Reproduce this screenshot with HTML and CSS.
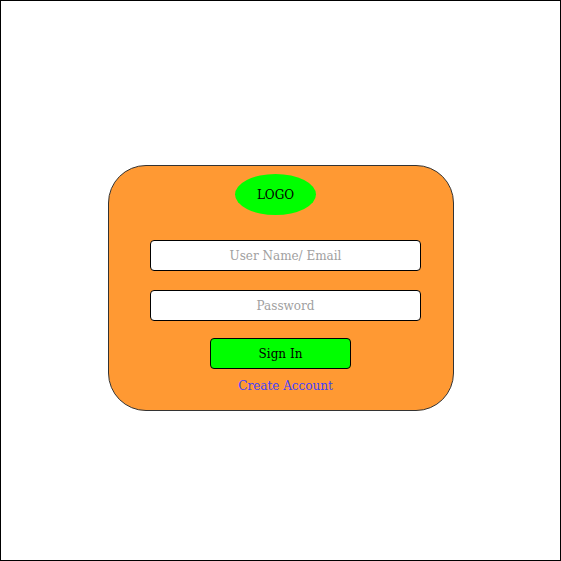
FILE: index.html
```html
<!DOCTYPE html>
<html lang="en">
<head>
    <meta charset="UTF-8">
    <meta name="viewport" content="width=device-width, initial-scale=1.0">
    <title>Login</title>
    <link rel="stylesheet" href="styles.css">
</head>
<body>
    <div class="frame">
        <div class="card">
            <div class="logo">LOGO</div>
            <input type="text" class="field" placeholder="User Name/ Email">
            <input type="password" class="field" placeholder="Password">
            <button class="sign-in">Sign In</button>
            <a href="#" class="create-link">Create Account</a>
        </div>
    </div>
</body>
</html>
```

FILE: styles.css
```css
* {
    margin: 0;
    padding: 0;
    box-sizing: border-box;
}

body {
    font-family: "DejaVu Serif", serif;
    font-size: 12px;
    background: #fff;
}

/* Outer page frame */
.frame {
    width: 561px;
    height: 561px;
    border: 1px solid #000;
    padding: 164px 0 0 107px;
}

/* Orange login card */
.card {
    width: 346px;
    height: 246px;
    background-color: #ff9933;
    border: 1px solid #333;
    border-radius: 38px;
    display: flex;
    flex-direction: column;
    align-items: flex-start;
    padding: 8px 0 0 41px;
}

.logo {
    width: 81px;
    height: 41px;
    margin-left: 85px;
    border-radius: 50%;
    background-color: #00ff00;
    color: #000;
    display: flex;
    justify-content: center;
    align-items: center;
}

.field {
    width: 271px;
    height: 31px;
    margin-top: 25px;
    border: 1px solid #000;
    border-radius: 4px;
    background: #fff;
    font-family: "DejaVu Serif", serif;
    font-size: 12px;
    text-align: center;
    outline: none;
}

.field + .field {
    margin-top: 19px;
}

.field::placeholder {
    color: #a0a0a0;
}

.sign-in {
    width: 141px;
    height: 31px;
    margin-top: 17px;
    margin-left: 60px;
    border: 1px solid #000;
    border-radius: 4px;
    background-color: #00ff00;
    color: #000;
    font-family: "DejaVu Serif", serif;
    font-size: 12px;
}

.create-link {
    width: 271px;
    margin-top: 10px;
    text-align: center;
    color: #3f3fff;
    text-decoration: none;
}
```
